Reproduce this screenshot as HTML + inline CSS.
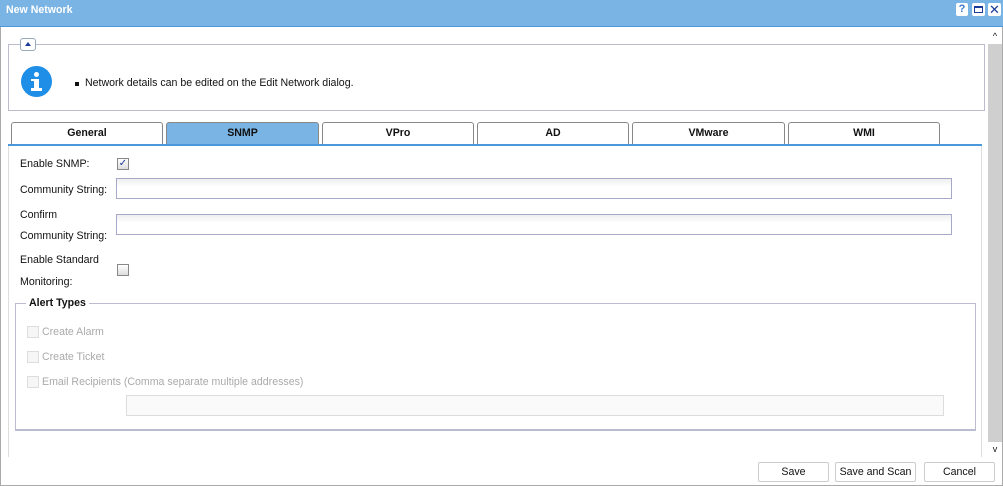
<!DOCTYPE html><html><head><style>
*{box-sizing:border-box}body{margin:0;width:1003px;height:486px;overflow:hidden;background:#fff;font-family:"Liberation Sans",sans-serif;font-size:10.6px;color:#111;position:relative}
.a{position:absolute}
.tab{position:absolute;top:122px;height:23px;border:1px solid #888;border-bottom:none;border-radius:3px 3px 0 0;background:#fff;text-align:center;line-height:21px;font-weight:bold;font-size:10.6px}
.inp{position:absolute;border:1px solid #a8a8c8;background:linear-gradient(#eee,#fff 40%)}
.cb{position:absolute;width:12px;height:12px;border:1px solid #888;background:linear-gradient(#fff,#ddd)}
.cbd{position:absolute;width:12px;height:12px;border:1px solid #ddd;background:#f6f6f6}
.g{color:#aaa}
.btn{position:absolute;top:462px;height:20px;border:1px solid #ccc;border-radius:2px;background:#fff;text-align:center;line-height:18px;font-size:10.6px}
</style></head><body>
<div class="a" style="left:0;top:0;width:1003px;height:486px;border:1px solid #aaa"></div>
<div class="a" style="left:0;top:0;width:1003px;height:27px;background:#7ab4e4;border-bottom:1px solid #4a98da"></div>
<div class="a" style="left:6px;top:4px;color:#fff;font-weight:bold;font-size:10.6px">New Network</div>
<div class="a" style="left:956px;top:3px;width:12px;height:13px;background:#fff;border-radius:2px;color:#3a7acc;font-weight:bold;font-size:11px;text-align:center;line-height:13px">?</div>
<div class="a" style="left:972px;top:3px;width:13px;height:13px;background:#fff;border-radius:2px"><div class="a" style="left:2px;top:3px;width:9px;height:7px;border:1px solid #1a3a9a;border-top-width:2px"></div></div>
<div class="a" style="left:988px;top:3px;width:13px;height:13px;background:#fff;border-radius:2px;color:#1a3a9a;font-size:13px;text-align:center;line-height:13px">✕</div>
<div class="a" style="left:988px;top:29px;width:14px;height:429px;background:#cfcfcf"></div>
<div class="a" style="left:988px;top:29px;width:14px;height:15px;background:#fff;font-size:9px;text-align:center;line-height:15px">^</div>
<div class="a" style="left:988px;top:442px;width:14px;height:16px;background:#fff;font-size:9px;text-align:center;line-height:14px">v</div>
<div class="a" style="left:8px;top:44px;width:977px;height:67px;border:1px solid #bcbccc"></div>
<div class="a" style="left:20px;top:38px;width:16px;height:13px;background:#fff;border:1px solid #9ab;border-radius:3px"><div class="a" style="left:4px;top:3px;border-left:3px solid transparent;border-right:3px solid transparent;border-bottom:4px solid #1a3a9a"></div></div>
<div class="a" style="left:21px;top:66px;width:31px;height:31px;border-radius:50%;background:#1e8ee6"><div class="a" style="left:13px;top:6px;width:5px;height:5px;border-radius:50%;background:#fff"></div><div class="a" style="left:13px;top:13px;width:5px;height:11px;background:#fff"></div><div class="a" style="left:10px;top:22px;width:11px;height:3px;background:#fff"></div><div class="a" style="left:10px;top:13px;width:4px;height:2px;background:#fff"></div></div>
<div class="a" style="left:75px;top:82px;width:4px;height:4px;background:#111"></div>
<div class="a" style="left:85px;top:77px">Network details can be edited on the Edit Network dialog.</div>
<div class="tab" style="left:11px;width:152px">General</div>
<div class="tab" style="left:166px;width:153px;background:#7ab4e4">SNMP</div>
<div class="tab" style="left:322px;width:152px">VPro</div>
<div class="tab" style="left:477px;width:152px">AD</div>
<div class="tab" style="left:632px;width:153px">VMware</div>
<div class="tab" style="left:788px;width:152px">WMI</div>
<div class="a" style="left:8px;top:144px;width:974px;height:2px;background:#4a98da"></div>
<div class="a" style="left:8px;top:146px;width:974px;height:311px;border-left:1px solid #ddd;border-right:1px solid #ddd"></div>
<div class="a" style="left:20px;top:158px">Enable SNMP:</div>
<div class="cb" style="left:117px;top:158px;color:#1a3a9a;font-size:10px;line-height:10px;text-align:center">✓</div>
<div class="a" style="left:20px;top:184px">Community String:</div>
<div class="inp" style="left:116px;top:178px;width:836px;height:21px"></div>
<div class="a" style="left:20px;top:209px">Confirm</div>
<div class="a" style="left:20px;top:230px">Community String:</div>
<div class="inp" style="left:116px;top:214px;width:836px;height:21px"></div>
<div class="a" style="left:20px;top:254px">Enable Standard</div>
<div class="a" style="left:20px;top:276px">Monitoring:</div>
<div class="cb" style="left:117px;top:264px"></div>
<div class="a" style="left:15px;top:303px;width:961px;height:128px;border:1px solid #bcbcd0;border-bottom-width:2px"></div>
<div class="a" style="left:26px;top:297px;background:#fff;padding:0 3px;font-weight:bold">Alert Types</div>
<div class="cbd" style="left:27px;top:326px"></div><div class="a g" style="left:42px;top:326px">Create Alarm</div>
<div class="cbd" style="left:27px;top:351px"></div><div class="a g" style="left:42px;top:351px">Create Ticket</div>
<div class="cbd" style="left:27px;top:376px"></div><div class="a g" style="left:42px;top:376px">Email Recipients (Comma separate multiple addresses)</div>
<div class="a" style="left:126px;top:395px;width:818px;height:21px;border:1px solid #ddd;background:#fafafa"></div>
<div class="btn" style="left:758px;width:71px">Save</div>
<div class="btn" style="left:835px;width:81px">Save and Scan</div>
<div class="btn" style="left:924px;width:71px">Cancel</div>
</body></html>
